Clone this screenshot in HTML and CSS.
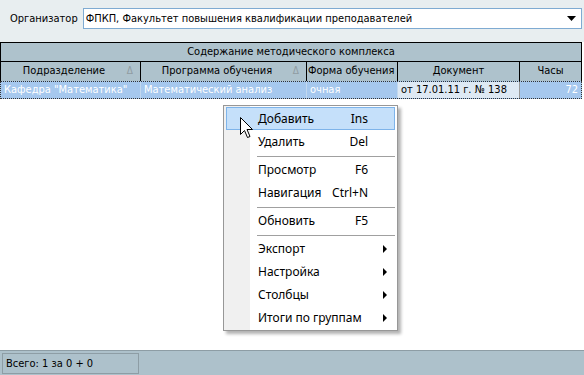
FILE: index.html
```html
<!DOCTYPE html>
<html lang="ru">
<head>
  <meta charset="UTF-8">
  <title>Содержание методического комплекса</title>
  <link rel="stylesheet" href="styles.css">
</head>
<body>
  <div class="window">
    <div class="filter-bar">
      <span class="filter-label">Организатор</span>
      <div class="combo">
        <span class="combo-text">ФПКП, Факультет повышения квалификации преподавателей</span>
        <svg class="combo-arrow" width="9" height="5" viewBox="0 0 9 5"><path d="M0 0h9L4.5 5z" fill="#000"/></svg>
      </div>
    </div>

    <div class="grid">
      <div class="band">Содержание методического комплекса</div>
      <div class="grid-row head-row">
        <div class="cell head sorted">Подразделение<span class="sort">&#916;</span></div>
        <div class="cell head sorted">Программа обучения<span class="sort">&#916;</span></div>
        <div class="cell head left">Форма обучения</div>
        <div class="cell head">Документ</div>
        <div class="cell head">Часы</div>
      </div>
      <div class="grid-row data-row">
        <div class="cell">Кафедра "Математика"</div>
        <div class="cell">Математический анализ</div>
        <div class="cell">очная</div>
        <div class="cell focused">от 17.01.11 г. № 138</div>
        <div class="cell num">72</div>
      </div>
    </div>

    <div class="status-bar">
      <div class="status-panel">Всего: 1 за 0 + 0</div>
    </div>

    <ul class="context-menu">
      <li class="menu-item active"><span>Добавить</span><span class="key">Ins</span></li>
      <li class="menu-item"><span>Удалить</span><span class="key">Del</span></li>
      <li class="separator"></li>
      <li class="menu-item"><span>Просмотр</span><span class="key">F6</span></li>
      <li class="menu-item"><span>Навигация</span><span class="key">Ctrl+N</span></li>
      <li class="separator"></li>
      <li class="menu-item"><span>Обновить</span><span class="key">F5</span></li>
      <li class="separator"></li>
      <li class="menu-item sub"><span>Экспорт</span></li>
      <li class="menu-item sub"><span>Настройка</span></li>
      <li class="menu-item sub"><span>Столбцы</span></li>
      <li class="menu-item sub"><span>Итоги по группам</span></li>
    </ul>

    <svg class="cursor" width="14" height="22" viewBox="0 0 14 22">
      <path d="M0.5 0.5v17l4-4 3 7 2.5-1-3-7h5.5z" fill="#fff" stroke="#000" stroke-width="1"/>
    </svg>
  </div>
</body>
</html>
```

FILE: styles.css
```css
body {
  margin: 0;
  font-family: 'DejaVu Sans Condensed', 'DejaVu Sans', sans-serif;
  font-size: 11px;
  color: #000;
}
.window {
  position: relative;
  width: 584px;
  height: 375px;
  display: flex;
  flex-direction: column;
  background-color: #fff;
  overflow: hidden;
}
.filter-bar {
  height: 42px;
  box-sizing: border-box;
  padding: 8px 2px 0 10px;
  display: flex;
  align-items: flex-start;
  gap: 5px;
  background-color: #e8eef0;
}
.filter-label {
  line-height: 21px;
}
.combo {
  flex: 1;
  height: 21px;
  box-sizing: border-box;
  border: 1px solid #7fabd2;
  background-color: #fff;
  display: flex;
  align-items: center;
  padding: 0 5px 0 2px;
}
.combo-text {
  flex: 1;
}
.grid {
  flex: 1;
  width: 582px;
  border-top: 1px solid #000;
}
.band {
  height: 18px;
  line-height: 18px;
  text-align: center;
  background-color: #aec2cc;
  border-left: 1px solid #000;
  border-right: 1px solid #000;
  border-bottom: 1px solid #000;
}
.grid-row {
  display: grid;
  grid-template-columns: 141px 166px 91px 122px 1fr;
}
.head-row {
  height: 19px;
  background-color: #aec2cc;
}
.cell {
  padding: 0 3px;
  white-space: nowrap;
  overflow: hidden;
}
.head {
  position: relative;
  line-height: 18px;
  text-align: center;
  border-right: 1px solid #000;
}
.head:first-child {
  border-left: 1px solid #000;
}
.head.left {
  text-align: left;
  padding-left: 1px;
}
.sorted {
  padding-right: 16px;
}
.sort {
  position: absolute;
  right: 7px;
  top: 0;
  color: #909ca2;
  font-size: 10px;
}
.data-row {
  height: 18px;
  line-height: 16px;
  box-sizing: border-box;
  border: 1px dotted #333;
  background-color: #a6c8ee;
  color: #fff;
  grid-template-columns: 140px 166px 91px 122px 1fr;
}
.data-row .cell {
  border-right: 1px solid #c2d8ef;
}
.data-row .focused {
  background-color: #dee9f4;
  color: #000;
  border-right: 1px solid #999;
}
.data-row .num {
  text-align: right;
  border-right: none;
  padding-right: 3px;
  overflow: visible;
}
.status-bar {
  height: 25px;
  box-sizing: border-box;
  border-top: 1px solid #8d9da5;
  background-color: #adc1cb;
  padding: 2px 0 0 2px;
}
.status-panel {
  width: 137px;
  height: 21px;
  box-sizing: border-box;
  border: 1px solid #8d9da5;
  line-height: 19px;
  padding-left: 3px;
}
.context-menu {
  position: absolute;
  left: 223px;
  top: 105px;
  width: 175px;
  margin: 0;
  padding: 1px 2px;
  box-sizing: border-box;
  list-style: none;
  border: 1px solid #979797;
  background: linear-gradient(to right, #f0f0f0 26px, #fff 26px);
  box-shadow: 3px 3px 3px rgba(0, 0, 0, 0.3);
  font-family: 'Noto Sans', sans-serif;
  font-size: 12px;
}
.menu-item {
  position: relative;
  height: 23px;
  box-sizing: border-box;
  display: flex;
  align-items: center;
  justify-content: space-between;
  padding: 0 26px 0 31px;
  border: 1px solid transparent;
}
.menu-item.active {
  background-color: #c5e0fa;
  border-color: #7eb4ea;
}
.menu-item.sub::after {
  content: '';
  position: absolute;
  right: 7px;
  top: 7px;
  border-left: 4px solid #000;
  border-top: 4px solid transparent;
  border-bottom: 4px solid transparent;
}
.separator {
  height: 1px;
  margin: 3px 0 1px 31px;
  background-color: #a0a0a0;
}
.cursor {
  position: absolute;
  left: 240px;
  top: 117px;
}
```
